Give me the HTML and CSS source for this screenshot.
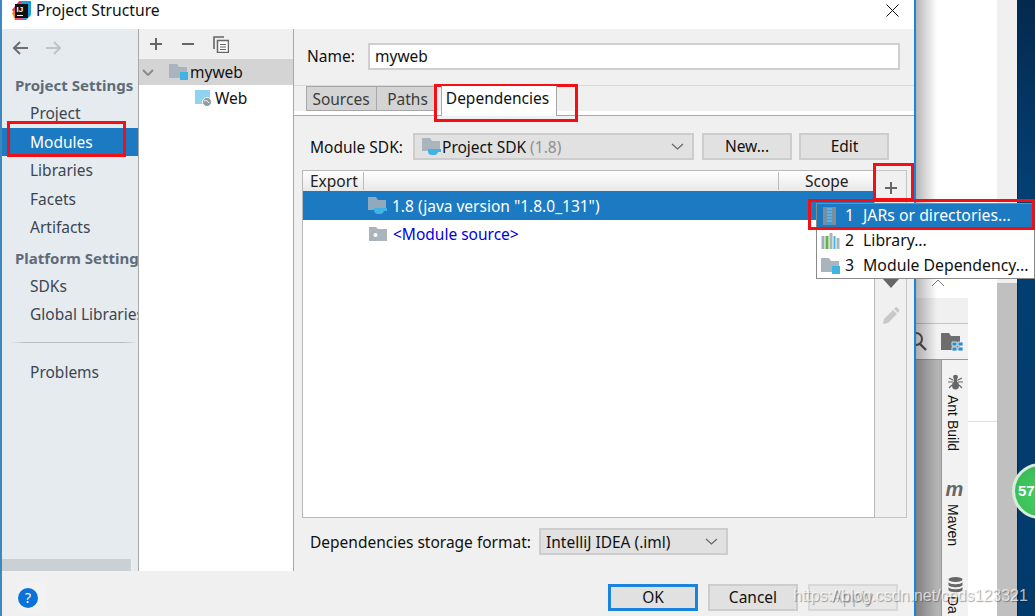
FILE: index.html
```html
<!DOCTYPE html>
<html lang="en">
<head>
<meta charset="utf-8">
<title>Project Structure</title>
<link rel="stylesheet" href="styles.css">
</head>
<body>
<div class="desk">
  <div class="back-main"><div class="back-line"></div></div>
  <div class="back-strip"></div>
  <div class="badge">57</div>
  <div class="tool-win">
    <div class="tw-head"><svg class="tw-chev" width="14" height="8" viewBox="0 0 14 8"><path d="M1 7l6-6 6 6" fill="none" stroke="#777" stroke-width="1"/></svg></div>
    <div class="tw-fade"></div>
    <div class="tw-tools">
      <svg width="53" height="34" viewBox="0 0 53 34">
        <circle cx="1" cy="15" r="6" fill="none" stroke="#555" stroke-width="2"/><path d="M5 20l6 6" stroke="#555" stroke-width="2.4"/>
        <path d="M26 9h8l2 3h9v14H26z" fill="#6e6e6e"/><path d="M37 18h5v4h-5zM43 18h5v4h-5zM43 23h5v4h-5zM37 23h5v4h-5z" fill="#2f8fd0" stroke="#f2f2f2" stroke-width=".8"/>
      </svg>
    </div>
    <div class="tw-body">
      <div class="tw-grey"></div>
      <div class="tw-side">
        <svg class="ant" width="15" height="16" viewBox="0 0 15 16"><ellipse cx="7.500" cy="3" rx="2.500" ry="2.200" fill="#666"/><ellipse cx="7.500" cy="6.500" rx="2" ry="2" fill="#666"/><ellipse cx="7.500" cy="11.500" rx="3.500" ry="4" fill="#666"/><path d="M1 4l4 2M14 4l-4 2M0 8h5M15 8h-5M1 14l3-3M14 14l-3-3" stroke="#666" stroke-width="1.200"/></svg>
        <span class="vtext t-ant">Ant Build</span>
        <span class="m-icon">m</span>
        <span class="vtext t-mvn">Maven</span>
        <svg class="db" width="15" height="16" viewBox="0 0 15 16"><ellipse cx="7.500" cy="2.500" rx="7" ry="2.500" fill="#666"/><path d="M.5 5c1 3 13 3 14 0v3c-1 3-13 3-14 0zM.5 10c1 3 13 3 14 0v3c-1 3-13 3-14 0z" fill="#666"/></svg>
        <span class="vtext t-da">Da</span>
      </div>
    </div>
  </div>
  <div class="shadow"></div>

  <div class="dialog">
    <div class="titlebar">
      <svg class="logo" width="19" height="20" viewBox="0 0 19 20">
        <path d="M0 9L7 0h7L4 14z" fill="#f0356b"/><path d="M0 12l4-4 6 11H3z" fill="#f58220"/><path d="M9 0h10v14l-5 5H8z" fill="#1f9ce0"/><path d="M3 14l6-12 5 8-4 9H3z" fill="#ef4a7b"/>
        <rect x="3" y="3" width="13" height="14" fill="#111"/>
        <text class="logo-txt" x="4.500" y="10.500">IJ</text>
        <path d="M5 14h6v1H5z" fill="#fff"/>
      </svg>
      <span class="ttl">Project Structure</span>
      <svg class="close" width="13" height="13" viewBox="0 0 13 13"><path d="M.5.5l12 12M12.500.5l-12 12" stroke="#111" stroke-width="1"/></svg>
    </div>
    <div class="main">
      <aside class="side">
        <div class="nav-arrows">
          <svg width="17" height="14" viewBox="0 0 17 14"><path d="M16 7H2M8 1L2 7l6 6" fill="none" stroke="#6e6e6e" stroke-width="2"/></svg>
          <svg width="17" height="14" viewBox="0 0 17 14"><path d="M1 7h14M9 1l6 6-6 6" fill="none" stroke="#c0c4c8" stroke-width="2"/></svg>
        </div>
        <div class="sec">Project Settings</div>
        <div class="item">Project</div>
        <div class="item sel">Modules</div>
        <div class="item">Libraries</div>
        <div class="item">Facets</div>
        <div class="item">Artifacts</div>
        <div class="sec sec2">Platform Settings</div>
        <div class="item">SDKs</div>
        <div class="item">Global Libraries</div>
        <div class="sep"></div>
        <div class="item">Problems</div>
        <div class="hscroll"></div>
      </aside>
      <section class="tree">
        <div class="tree-tools">
          <svg width="14" height="14" viewBox="0 0 14 14"><path d="M7 1v12M1 7h12" stroke="#666" stroke-width="2"/></svg>
          <svg width="14" height="14" viewBox="0 0 14 14"><path d="M1 7h12" stroke="#666" stroke-width="2"/></svg>
          <svg width="16" height="17" viewBox="0 0 16 17"><path d="M1 13V1h10" fill="none" stroke="#666" stroke-width="1.600"/><rect x="4.500" y="4.500" width="11" height="12" fill="#fff" stroke="#666" stroke-width="1.500"/><path d="M7 8h6v1H7zM7 10.500h6v1H7zM7 13h6v1H7z" fill="#666"/></svg>
        </div>
        <div class="tree-row root">
          <svg class="chev" width="12" height="7" viewBox="0 0 12 7"><path d="M1 1l5 5 5-5" fill="none" stroke="#8a8a8a" stroke-width="2"/></svg>
          <svg width="19" height="18" viewBox="0 0 19 18"><path d="M0 1h8l2 3h8v11H0z" fill="#a9b4bc"/><rect x="11" y="9" width="8" height="8" fill="#3fb3e3"/></svg>
          <span>myweb</span>
        </div>
        <div class="tree-row leaf">
          <svg width="18" height="18" viewBox="0 0 18 18"><rect x="1" y="1" width="15" height="14" fill="#8fd3ef"/><circle cx="13" cy="13" r="4.500" fill="#8f9ba3" stroke="#fff" stroke-width="1"/><path d="M10 12c2-1 4 0 5 2" stroke="#fff" stroke-width="1" fill="none"/></svg>
          <span>Web</span>
        </div>
      </section>
      <section class="panel">
        <div class="name-row">
          <label class="lbl name-lbl">Name:</label>
          <div class="input">myweb</div>
        </div>
        <div class="tabs">
          <div class="tab t1">Sources</div>
          <div class="tab t2">Paths</div>
          <div class="tab on">Dependencies</div>
        </div>
        <div class="tabline"></div>
        <div class="sdk-row">
          <span class="lbl sdk-lbl">Module SDK:</span>
          <div class="combo sdk-combo">
            <svg width="19" height="17" viewBox="0 0 19 17"><path d="M0 0h8l2 3h8v10H0z" fill="#a9b4bc"/><path d="M6 11h10v2a4 4 0 0 1-4 4H10a4 4 0 0 1-4-4zM16 11h3v3h-3" fill="#3fb3e3"/></svg>
            <span class="sdk-text">Project SDK <em>(1.8)</em></span>
            <svg class="cv" width="13" height="7" viewBox="0 0 13 7"><path d="M1 1l5.500 5L12 1" fill="none" stroke="#666" stroke-width="1.200"/></svg>
          </div>
          <div class="btn new">New...</div>
          <div class="btn edit">Edit</div>
        </div>
        <div class="table-wrap">
          <div class="table">
            <div class="thead"><span class="th-exp">Export</span><span class="th-mid"></span><span class="th-scope">Scope</span></div>
            <div class="trow tsel">
              <svg width="19" height="17" viewBox="0 0 19 17"><path d="M0 0h8l2 3h8v10H0z" fill="#8fa9bd"/><path d="M6 11h10v2a4 4 0 0 1-4 4H10a4 4 0 0 1-4-4zM16 11h3v3h-3" fill="#3fb3e3"/></svg>
              <span>1.8 (java version "1.8.0_131")</span>
            </div>
            <div class="trow tsrc">
              <svg width="18" height="14" viewBox="0 0 18 14"><path d="M0 0h7l2 2h9v12H0z" fill="#a9b4bc"/><circle cx="6.500" cy="8" r="2" fill="#fff"/></svg>
              <span>&lt;Module source&gt;</span>
            </div>
          </div>
          <div class="ttools">
            <svg class="plus" width="14" height="14" viewBox="0 0 14 14"><path d="M7 1v12M1 7h12" stroke="#666" stroke-width="2"/></svg>
            <svg class="down" width="16" height="9" viewBox="0 0 16 9"><path d="M0 0h16L8 9z" fill="#666"/></svg>
            <svg class="pen" width="18" height="18" viewBox="0 0 18 18"><path d="M1 17l1-5L11 3l4 4-9 9z" fill="#c8c8c8"/><path d="M12 2l1.500-1.500a1 1 0 0 1 1.500 0l2 2a1 1 0 0 1 0 1.500L16 6z" fill="#c8c8c8"/></svg>
          </div>
        </div>
        <div class="fmt-row">
          <span class="lbl fmt-lbl">Dependencies storage format:</span>
          <div class="combo fmt-combo">
            <span>IntelliJ IDEA (.iml)</span>
            <svg class="cv" width="13" height="7" viewBox="0 0 13 7"><path d="M1 1l5.500 5L12 1" fill="none" stroke="#666" stroke-width="1.200"/></svg>
          </div>
        </div>
      </section>
    </div>
    <div class="footer">
      <div class="help-box"><div class="help">?</div></div>
      <div class="btn ok">OK</div>
      <div class="btn cancel">Cancel</div>
      <div class="btn apply">Apply</div>
    </div>
  </div>

  <div class="menu">
    <div class="mi mi-sel">
      <svg width="19" height="18" viewBox="0 0 19 18"><rect x="2" y="0" width="13" height="18" fill="#7d8e9b"/><rect x="6" y="0" width="5" height="18" fill="#3d9bd8"/><path d="M6 2h5M6 5h5M6 8h5M6 11h5M6 14h5" stroke="#8cc6ea" stroke-width="1"/></svg>
      <span class="mn">1</span><span>JARs or directories...</span>
    </div>
    <div class="mi">
      <svg width="18" height="16" viewBox="0 0 18 16"><path d="M0 3h3v13H0z" fill="#9fb0bc"/><path d="M4 3h3v13H4z" fill="#62b543"/><path d="M8 0h3v16H8z" fill="#a9b4bc"/><path d="M12 3h2v13h-2z" fill="#40b6e0"/><path d="M15 5h3v11h-3z" fill="#a9b4bc"/></svg>
      <span class="mn">2</span><span>Library...</span>
    </div>
    <div class="mi">
      <svg width="19" height="18" viewBox="0 0 19 18"><path d="M0 1h8l2 3h8v11H0z" fill="#a9b4bc"/><rect x="11" y="9" width="8" height="8" fill="#3fb3e3"/></svg>
      <span class="mn">3</span><span>Module Dependency...</span>
    </div>
  </div>

  <div class="red r-mod"></div>
  <div class="red r-dep"></div>
  <div class="red r-plus"></div>
  <div class="red r-jar"></div>
  <div class="mark">https://blog.csdn.net/cpds123321</div>
</div>
</body>
</html>
```

FILE: styles.css
```css
* { box-sizing: border-box; }
html, body { margin: 0; padding: 0; }
body { width: 1035px; height: 616px; overflow: hidden; font-family: "Noto Sans", "Open Sans", sans-serif; font-size: 15.500px; color: #111; }

.desk { position: relative; width: 1035px; height: 616px; overflow: hidden; background: linear-gradient(180deg, #04294f 0%, #033f73 30%, #023a6c 100%); }
.back-main { position: absolute; left: 900px; top: 0; width: 97px; height: 616px; background: #fff; }
.back-line { position: absolute; left: 68px; top: 421px; width: 29px; height: 1px; background: #ddd; }
.back-strip { position: absolute; left: 997px; top: 0; width: 21px; height: 616px; border-right: 1px solid #1c2530; background: linear-gradient(180deg, #f0f0f0 0, #f0f0f0 283px, #c0c0c0 283px, #c0c0c0 100%); }
.badge { position: absolute; left: 1012px; top: 463px; width: 56px; height: 56px; border-radius: 50%; background: radial-gradient(circle at 50% 60%, #46d064, #35b552); border: 3px solid #d7ecd9; color: #fff; font-family: "Liberation Sans", sans-serif; font-weight: 700; font-size: 15px; line-height: 50px; padding-left: 3px; }

.tool-win { position: absolute; left: 915px; top: 279px; width: 53px; height: 337px; display: flex; flex-direction: column; background: #fff; }
.tw-head { height: 19px; background: #fff; position: relative; }
.tw-chev { position: absolute; left: 16px; top: 0; }
.tw-fade { height: 26px; background: #f0f0f0; border-bottom: 1px solid #c4c4c4; }
.tw-tools { height: 36px; background: #f2f2f2; border-bottom: 1px solid #999; }
.tw-tools svg { display: block; }
.tw-body { flex: 1; display: flex; min-height: 0; }
.tw-grey { width: 26px; background: #b4b4b4; }
.tw-side { width: 27px; background: #f2f2f2; border-left: 1px solid #999; padding-right: 4px; display: flex; flex-direction: column; align-items: center; overflow: hidden; }
.ant { margin-top: 14px; margin-left: 4px; flex: none; }
.vtext { writing-mode: vertical-rl; font-family: "Liberation Sans", sans-serif; font-size: 14px; color: #111; line-height: 16px; flex: none; }
.t-ant { margin-top: 5px; }
.m-icon { margin-top: 28px; margin-left: 3px; font-family: "Liberation Sans", sans-serif; font-weight: 700; font-style: italic; font-size: 20px; line-height: 20px; color: #666; flex: none; }
.t-mvn { margin-top: 5px; }
.db { margin-top: 31px; margin-left: 4px; flex: none; }
.t-da { margin-top: 3px; }

.shadow { position: absolute; left: 915px; top: 0; width: 22px; height: 616px; background: linear-gradient(90deg, rgba(0,0,0,.3), rgba(0,0,0,0)); }

.dialog { position: absolute; left: 0; top: 0; width: 916px; height: 616px; display: flex; flex-direction: column; background: #f0f0f0; border-left: 2px solid #3f87bf; border-right: 2px solid #1a84dc; }
.titlebar { height: 29px; flex: none; display: flex; align-items: center; background: #fff; padding-left: 10px; }
.logo { margin-top: -8px; flex: none; }
.logo-txt { font-family: "Liberation Sans", sans-serif; font-weight: 700; font-size: 8px; fill: #fff; }
.ttl { margin-left: 5px; margin-top: -10px; font-size: 15.700px; color: #111; }
.close { margin-left: auto; margin-right: 15px; margin-top: -8px; }

.main { height: 542px; flex: none; display: flex; }
.side { width: 137px; flex: none; background: #e6ebf0; border-right: 1px solid #a8a8a8; position: relative; overflow: hidden; }
.nav-arrows { display: flex; gap: 16px; padding: 12px 0 0 10px; height: 42px; }
.sec { height: 28px; padding-left: 13px; line-height: 28px; font-weight: 700; font-size: 15px; color: #5f6b78; white-space: nowrap; }
.sec2 { margin-top: 2px; }
.item { height: 28.500px; line-height: 28px; padding-left: 28px; color: #3c4650; white-space: nowrap; }
.sel { background: #1b7ac2; color: #fff; }
.sep { height: 1px; margin: 13px 0 15px 8px; background: linear-gradient(90deg, #e6ebf0, #b8bcc0 12%, #b8bcc0 88%, #e6ebf0); }
.hscroll { position: absolute; left: 0; bottom: 0; width: 130px; height: 12px; background: #cbd0d5; border-right: 1px solid #f0f0f0; }

.tree { width: 155px; flex: none; background: #fff; border-right: 1px solid #a8a8a8; }
.tree-tools { height: 30px; background: #f0f0f0; display: flex; align-items: center; gap: 18px; padding-left: 10px; }
.tree-row { display: flex; align-items: center; white-space: nowrap; }
.root { height: 26px; background: #d4d4d4; padding-left: 3px; }
.root .chev { margin-right: 15px; }
.root span { margin-left: 2px; }
.leaf { height: 26px; padding-left: 55px; }
.leaf span { margin-left: 3px; }

.panel { flex: 1; min-width: 0; display: flex; flex-direction: column; background: #f0f0f0; }
.lbl { white-space: nowrap; }
.name-row { display: flex; align-items: center; margin-top: 14px; height: 27px; padding: 0 14px 0 13px; }
.name-lbl { width: 61px; flex: none; margin-top: -1px; }
.input { flex: 1; height: 27px; background: #fff; border: 2px solid #cfcfcf; line-height: 22px; padding-left: 5px; }
.tabs { display: flex; margin-top: 15px; height: 26px; padding-left: 12px; border-top: 1px solid #d9d9d9; align-items: stretch; }
.tab { height: 25px; line-height: 24px; text-align: center; background: #d4d4d4; border: 1px solid #a8a8a8; color: #3c3c3c; }
.t1 { width: 71px; padding-right: 1px; }
.t2 { width: 59px; padding-left: 2px; border-left: 0; border-right: 0; }
.on { width: 116px; margin-left: 5px; padding-right: 3px; background: #fff; color: #111; height: 30px; border-top: 0; border-bottom: 0; z-index: 1; }
.tabline { height: 5px; background: #fff; border-bottom: 1px solid #a8a8a8; }
.sdk-row { display: flex; align-items: center; margin-top: 17px; height: 27px; padding-left: 16px; }
.sdk-lbl { width: 103px; flex: none; }
.combo { height: 27px; display: flex; align-items: center; background: #e1e1e1; border: 2px solid #cdcdcd; white-space: nowrap; }
.sdk-combo { width: 281px; padding-left: 7px; }
.sdk-text { margin-left: 1px; }
.sdk-text em { font-style: normal; color: #8f8f8f; }
.cv { margin-left: auto; margin-right: 8px; flex: none; }
.btn { height: 27px; line-height: 23px; text-align: center; background: #e1e1e1; border: 2px solid #cdcdcd; color: #111; }
.new { width: 90px; margin-left: 8px; }
.edit { width: 90px; margin-left: 7px; padding-left: 1px; }
.table-wrap { display: flex; margin: 10px 7px 0 8px; height: 348px; }
.table { flex: 1; min-width: 0; background: #fff; border: 1px solid #b8b8b8; }
.thead { height: 20px; display: flex; align-items: center; background: linear-gradient(180deg, #fff, #e8e8e8); color: #222; }
.th-exp { width: 61px; padding-left: 7px; height: 18px; line-height: 18px; border-right: 1px solid #bbb; flex: none; }
.th-mid { width: 415px; height: 18px; border-right: 1px solid #bbb; flex: none; }
.th-scope { padding-left: 26px; line-height: 18px; }
.trow { display: flex; align-items: center; padding-left: 65px; gap: 5px; white-space: nowrap; }
.tsel { height: 29px; background: #1b7ac2; color: #fff; }
.tsrc { height: 28px; color: #0000e6; padding-left: 66px; gap: 6px; }
.ttools { width: 32px; flex: none; display: flex; flex-direction: column; align-items: center; border: 1px solid #c4c4c4; border-left: 0; background: #f0f0f0; }
.plus { margin-top: 10px; flex: none; }
.down { margin-top: 84px; flex: none; }
.pen { margin-top: 19px; flex: none; }
.fmt-row { display: flex; align-items: center; margin-top: 10px; height: 27px; padding-left: 16px; }
.fmt-lbl { width: 229px; flex: none; }
.fmt-combo { width: 189px; padding-left: 5px; }

.footer { height: 45px; flex: none; position: relative; display: flex; padding: 13px 0 0 606px; gap: 10px; }
.help-box { position: absolute; left: 15px; top: 12px; width: 30px; height: 30px; background: #f2f2f2; display: flex; align-items: center; padding-left: 1px; }
.help { width: 20px; height: 20px; border-radius: 50%; background: #0a72d8; color: #fff; text-align: center; line-height: 20px; font-size: 14px; }
.ok { width: 90px; border-color: #1a84dc; border-width: 3px; line-height: 21px; }
.cancel { width: 90px; }
.apply { width: 90px; color: #b4b4b4; background: #e8e8e8; border-color: #d8d8d8; }

.menu { position: absolute; left: 816px; top: 203px; width: 219px; height: 76px; background: #fff; border: 1px solid #8a8a8a; display: flex; flex-direction: column; font-size: 15.800px; }
.mi { height: 25px; display: flex; align-items: center; padding-left: 4px; white-space: nowrap; color: #111; line-height: 20px; }
.mi span { margin-top: -2px; }
.mi svg { width: 19px; flex: none; }
.mi-sel { background: #1b7ac2; color: #fff; }
.mn { margin: 0 9px 0 5px; }

.red { position: absolute; border: 3px solid #f40f14; }
.r-mod { left: 7px; top: 121px; width: 119px; height: 36px; }
.r-dep { left: 434px; top: 84px; width: 144px; height: 38px; }
.r-plus { left: 873px; top: 163px; width: 41px; height: 38px; }
.r-jar { left: 808px; top: 199px; width: 227px; height: 31px; }
.mark { position: absolute; left: 793px; top: 587px; font-family: "Liberation Sans", sans-serif; font-size: 16px; color: rgba(255,255,255,.7); text-shadow: 1px 1px 1px rgba(0,0,0,.35); white-space: nowrap; }
```
